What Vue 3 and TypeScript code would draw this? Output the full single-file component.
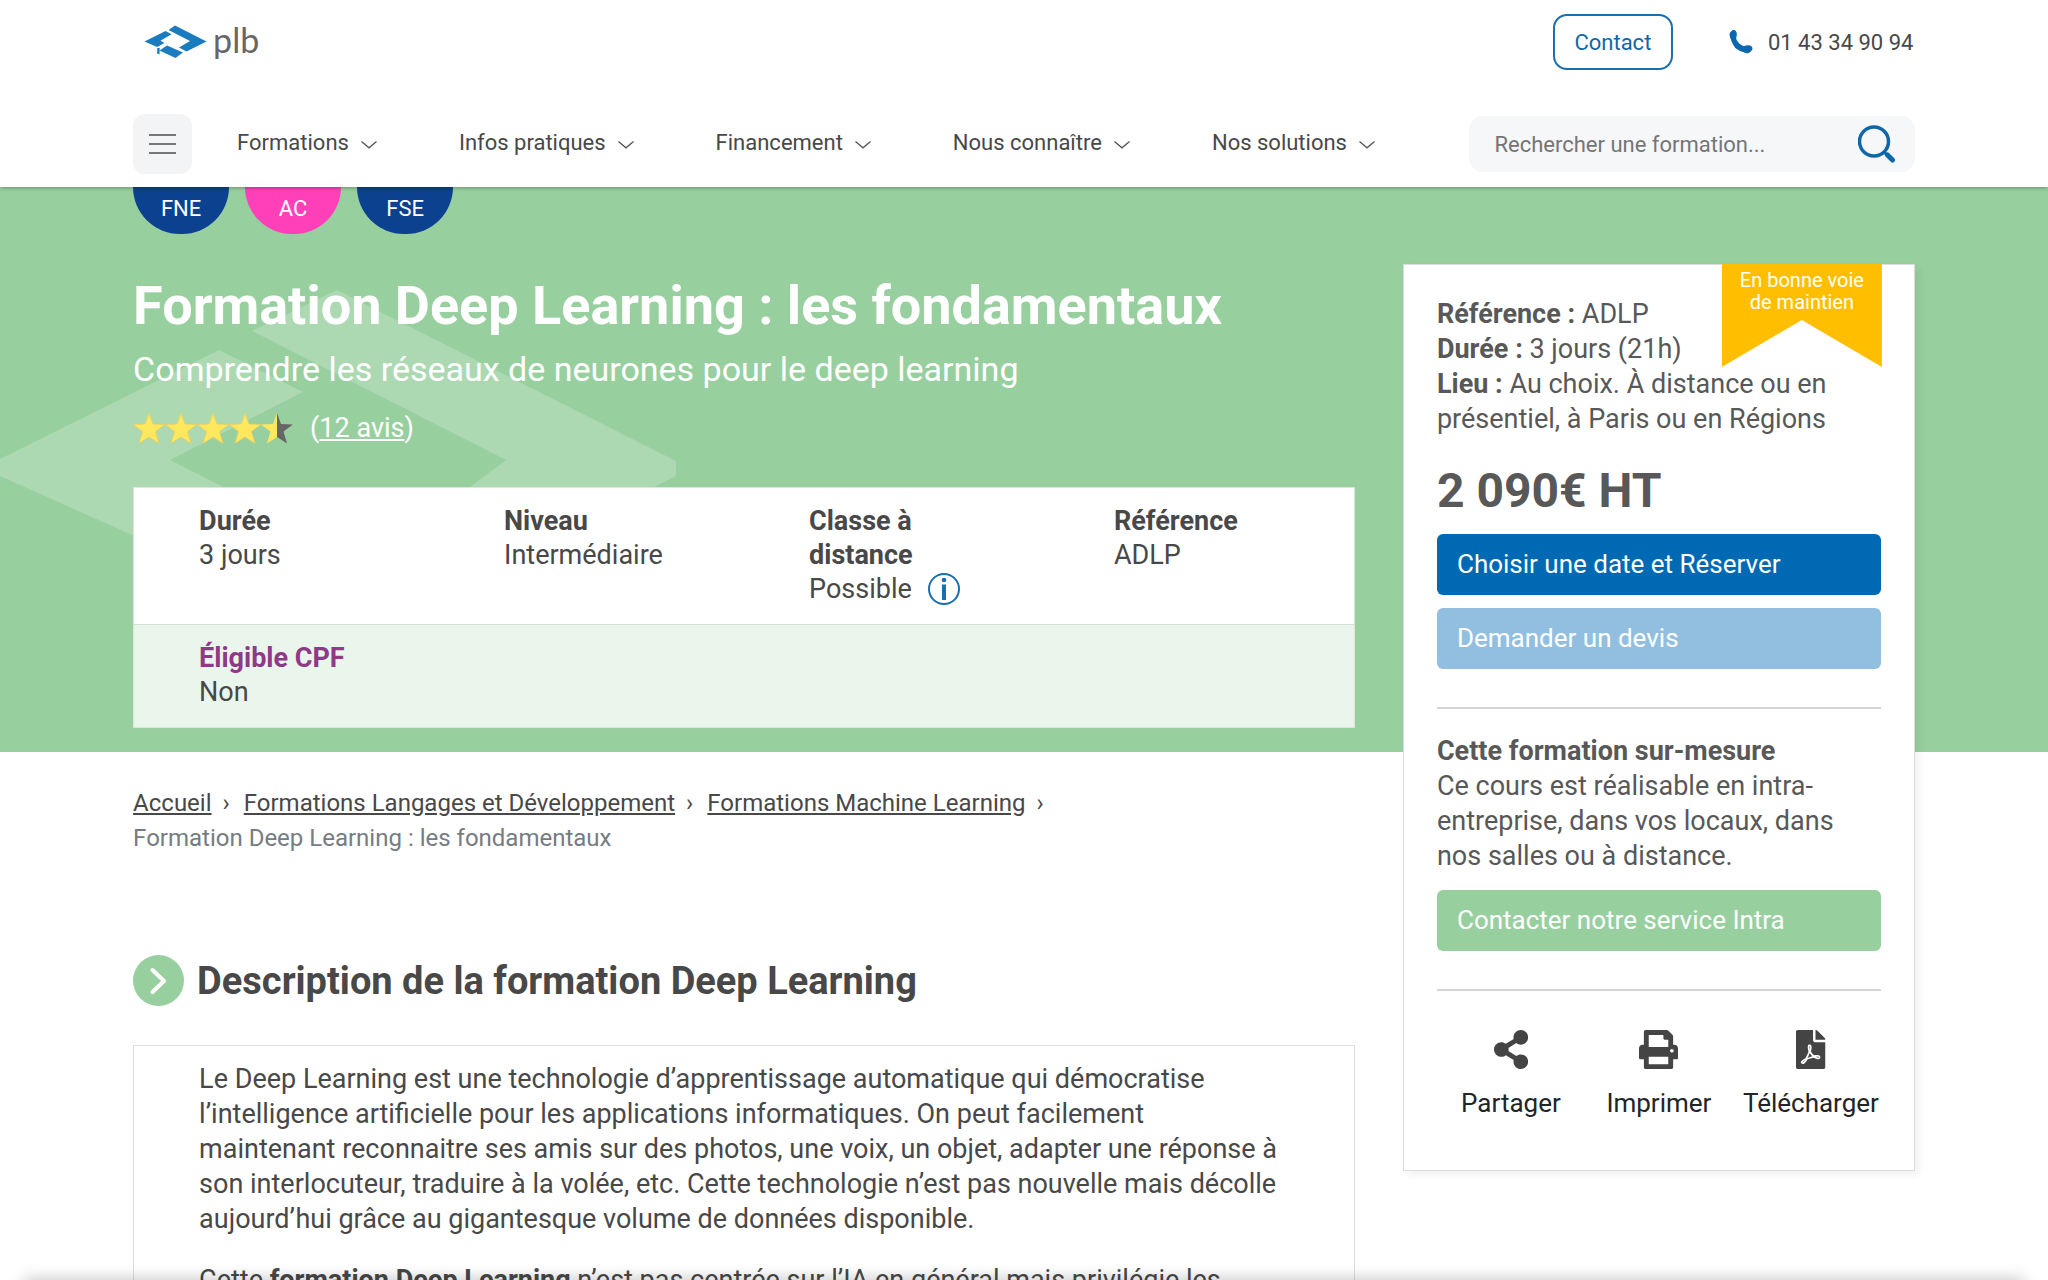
<script setup lang="ts">
interface Fact {
  label: string
  value: string
  info?: boolean
}

interface Action {
  label: string
  viewBox: string
  path: string
}

const navItems: string[] = ['Formations', 'Infos pratiques', 'Financement', 'Nous connaître', 'Nos solutions']

const badges: { text: string; tone: string }[] = [
  { text: 'FNE', tone: 'blue' },
  { text: 'AC', tone: 'pink' },
  { text: 'FSE', tone: 'blue' },
]

const facts: Fact[] = [
  { label: 'Durée', value: '3 jours' },
  { label: 'Niveau', value: 'Intermédiaire' },
  { label: 'Classe à distance', value: 'Possible', info: true },
  { label: 'Référence', value: 'ADLP' },
]

const crumbs: string[] = ['Accueil', 'Formations Langages et Développement', 'Formations Machine Learning']

const starPath = 'M16 0l4 11 12 .5-9.500 7 3.500 12L16 24 6 30.500l3.500-12L0 11.500l12-.5z'

const actions: Action[] = [
  {
    label: 'Partager',
    viewBox: '0 0 448 512',
    path: 'M352 320c-22.608 0-43.387 7.819-59.79 20.895l-102.486-64.054a96.551 96.551 0 0 0 0-41.683l102.486-64.054C308.613 184.181 329.392 192 352 192c53.019 0 96-42.981 96-96S405.019 0 352 0s-96 42.981-96 96c0 7.158.79 14.13 2.276 20.841L155.79 180.895C139.387 167.819 118.608 160 96 160c-53.019 0-96 42.981-96 96s42.981 96 96 96c22.608 0 43.387-7.819 59.79-20.895l102.486 64.054A96.301 96.301 0 0 0 256 416c0 53.019 42.981 96 96 96s96-42.981 96-96-42.981-96-96-96z',
  },
  {
    label: 'Imprimer',
    viewBox: '0 0 512 512',
    path: 'M464 192h-16V81.941a24 24 0 0 0-7.029-16.97L383.029 7.029A24 24 0 0 0 366.059 0H88C74.745 0 64 10.745 64 24v168H48c-26.51 0-48 21.49-48 48v132c0 6.627 5.373 12 12 12h52v104c0 13.255 10.745 24 24 24h336c13.255 0 24-10.745 24-24V384h52c6.627 0 12-5.373 12-12V240c0-26.51-21.49-48-48-48zm-80 256H128v-96h256v96zM128 224V64h192v40c0 13.2 10.8 24 24 24h40v96H128zm304 72c-13.254 0-24-10.746-24-24s10.746-24 24-24 24 10.746 24 24-10.746 24-24 24z',
  },
  {
    label: 'Télécharger',
    viewBox: '0 0 384 512',
    path: 'M181.9 256.1c-5-16-4.9-46.9-2-46.9 8.4 0 7.6 36.9 2 46.9zm-1.7 47.2c-7.7 20.2-17.3 43.3-28.4 62.7 18.3-7 39-17.2 62.9-21.9-12.7-9.6-24.9-23.4-34.5-40.8zM86.1 428.1c0 .8 13.2-5.4 34.9-40.2-6.7 6.3-29.1 24.5-34.9 40.2zM248 160h136v328c0 13.3-10.7 24-24 24H24c-13.3 0-24-10.7-24-24V24C0 10.7 10.7 0 24 0h200v136c0 13.2 10.8 24 24 24zm-8 171.8c-20-12.2-33.3-29-42.7-53.8 4.5-18.5 11.6-46.6 6.2-64.2-4.7-29.4-42.4-26.5-47.8-6.8-5 18.3-.4 44.1 8.1 77-11.6 27.6-28.7 64.6-40.8 85.8-.1 0-.1.1-.2.1-27.1 13.9-73.6 44.5-54.5 68 5.6 6.9 16 10 21.5 10 17.9 0 35.7-18 61.1-61.8 25.8-8.5 54.1-19.1 79-23.2 21.7 11.8 47.1 19.5 64 19.5 29.2 0 31.2-32 19.7-43.4-13.9-13.6-54.3-9.7-73.6-7.2zM377 105L279 7c-4.5-4.5-10.600-7-17-7h-6v128h128v-6.1c0-6.3-2.5-12.4-7-16.9zm-74.1 255.3c4.1-2.7-2.5-11.9-42.8-9 37.1 15.8 42.8 9 42.8 9z',
  },
]
</script>

<template>
  <div class="page">
    <header class="header">
      <div class="topbar">
        <a href="#" class="logo" aria-label="plb">
          <svg width="64" height="34" viewBox="0 0 64 34" aria-hidden="true">
            <g fill="#1b7bbf">
              <path d="M.5 16.500 21.500 6l6 3.200-11 6.600 4 2.200-7.500 4z" />
              <path d="M24.500 5 31 .5l31.500 16-20 10-7.500-4 11-6.500z" />
              <path d="M23 20.500l16 7-7.500 5.500-16-7.500z" />
              <path d="M13.300 23h2.400l-.2 7-1-1.500-1.500.6z" />
            </g>
          </svg>
          <span>plb</span>
        </a>
        <div class="topbar-right">
          <button type="button" class="contact">Contact</button>
          <a href="#" class="phone">
            <svg width="24" height="24" viewBox="0 0 16 16" fill="#0c68ae" aria-hidden="true">
              <path d="M1.885.511a1.745 1.745 0 0 1 2.610.163C5.600 2 5.300 3.600 4.700 5.600c.9 2.200 2.700 4.300 5.200 5.200 1.600-.8 3.900-1 5.200.2.8.8.7 1.900.003 2.611l-1.034 1.034c-.74.74-1.846 1.065-2.877.702a18.634 18.634 0 0 1-7.010-3.420A18.634 18.634 0 0 1 .8 5.200C.4 3.800.1 2.300.85 1.545z" />
            </svg>
            01 43 34 90 94
          </a>
        </div>
      </div>
      <div class="menubar">
        <button type="button" class="burger" aria-label="Menu"><i></i><i></i><i></i></button>
        <nav class="nav">
          <a v-for="item in navItems" :key="item" href="#">
            {{ item }}
            <svg width="16" height="8" viewBox="0 0 16 8" fill="none" stroke="#555" stroke-width="1.300" aria-hidden="true">
              <path d="M.5.5 8 6.800 15.500.5" />
            </svg>
          </a>
        </nav>
        <form class="search" @submit.prevent>
          <input type="search" placeholder="Rechercher une formation..." aria-label="Rechercher une formation" />
          <button type="submit" aria-label="Rechercher">
            <svg width="38" height="38" viewBox="0 0 38 38" fill="none" stroke="#0f67a8" aria-hidden="true">
              <circle cx="16" cy="16.500" r="14.500" stroke-width="3.500" />
              <path d="M26 27l4 4" stroke-width="3" />
              <path d="M29.500 30l5 5" stroke-width="5" stroke-linecap="round" />
            </svg>
          </button>
        </form>
      </div>
    </header>

    <main class="layout">
      <div class="hero-bg">
        <svg width="676" height="400" viewBox="0 0 676 400" fill="#fff" fill-opacity=".2" aria-hidden="true">
          <path d="M0 272 219 163l84 42-133 68 172 87-81 42-17-4L0 289z" />
          <path d="M337 103 676 274v15L470 393l-74-38 110-82-254-129z" />
        </svg>
      </div>

      <section class="hero">
        <ul class="badges">
          <li v-for="badge in badges" :key="badge.text" :class="badge.tone">{{ badge.text }}</li>
        </ul>
        <h1>Formation Deep Learning : les fondamentaux</h1>
        <p class="subtitle">Comprendre les réseaux de neurones pour le deep learning</p>
        <div class="rating">
          <span class="stars" role="img" aria-label="4,5 sur 5">
            <svg v-for="n in 4" :key="n" width="32" height="32" viewBox="0 0 32 32">
              <path :d="starPath" fill="#ffe75e" stroke="#e3cf62" stroke-width=".8" />
            </svg>
            <svg width="32" height="32" viewBox="0 0 32 32">
              <defs>
                <linearGradient id="half">
                  <stop offset=".5" stop-color="#ffe75e" />
                  <stop offset=".5" stop-color="#666" />
                </linearGradient>
              </defs>
              <path :d="starPath" fill="url(#half)" />
            </svg>
          </span>
          <span class="reviews">(<a href="#">12 avis</a>)</span>
        </div>
        <div class="facts">
          <dl class="facts-row">
            <div v-for="fact in facts" :key="fact.label">
              <dt>{{ fact.label }}</dt>
              <dd>
                {{ fact.value }}
                <svg v-if="fact.info" width="34" height="34" viewBox="0 0 34 34" fill="none" stroke="#1a6fad" aria-hidden="true">
                  <circle cx="17" cy="17" r="15" stroke-width="2" />
                  <path d="M17 12.500V28" stroke-width="4" />
                  <circle cx="17" cy="8" r="2.300" fill="#1a6fad" stroke="none" />
                </svg>
              </dd>
            </div>
          </dl>
          <dl class="facts-row cpf">
            <div>
              <dt>Éligible CPF</dt>
              <dd>Non</dd>
            </div>
          </dl>
        </div>
      </section>

      <article class="content">
        <nav class="crumbs" aria-label="Fil d’Ariane">
          <span v-for="crumb in crumbs" :key="crumb" class="crumb">
            <a href="#">{{ crumb }}</a><span class="sep">›</span>
          </span>
          <span class="current">Formation Deep Learning : les fondamentaux</span>
        </nav>
        <h2>
          <svg width="51" height="51" viewBox="0 0 51 51" aria-hidden="true">
            <circle cx="25.500" cy="25.500" r="25.500" fill="#98cf9f" />
            <path d="M19.500 15 31 26 19.500 37" fill="none" stroke="#fff" stroke-width="4" stroke-linecap="round" stroke-linejoin="round" />
          </svg>
          Description de la formation Deep Learning
        </h2>
        <div class="description">
          <p>
            Le Deep Learning est une technologie d’apprentissage automatique qui démocratise l’intelligence
            artificielle pour les applications informatiques. On peut facilement maintenant reconnaitre ses amis
            sur des photos, une voix, un objet, adapter une réponse à son interlocuteur, traduire à la volée, etc.
            Cette technologie n’est pas nouvelle mais décolle aujourd’hui grâce au gigantesque volume de données
            disponible.
          </p>
          <p>
            Cette <strong>formation Deep Learning</strong> n’est pas centrée sur l’IA en général mais privilégie les
          </p>
        </div>
      </article>

      <aside class="card">
        <div class="ribbon">En bonne voie de maintien</div>
        <p class="card-text">
          <strong>Référence :</strong> ADLP<br />
          <strong>Durée :</strong> 3 jours (21h)<br />
          <strong>Lieu :</strong> Au choix. À distance ou en présentiel, à Paris ou en Régions
        </p>
        <p class="price">2 090€ HT</p>
        <button type="button" class="cta book">Choisir une date et Réserver</button>
        <button type="button" class="cta quote">Demander un devis</button>
        <hr />
        <p class="card-text">
          <strong>Cette formation sur-mesure</strong><br />
          Ce cours est réalisable en intra-entreprise, dans vos locaux, dans nos salles ou à distance.
        </p>
        <button type="button" class="cta intra">Contacter notre service Intra</button>
        <hr />
        <div class="actions">
          <a v-for="action in actions" :key="action.label" href="#">
            <svg height="39" :viewBox="action.viewBox" fill="#444" aria-hidden="true"><path :d="action.path" /></svg>
            {{ action.label }}
          </a>
        </div>
      </aside>
    </main>
    <div class="dock" aria-hidden="true"></div>
  </div>
</template>

<style>
body {
  margin: 0;
  background: #fff;
}
</style>

<style scoped>
* {
  box-sizing: border-box;
}

.page {
  height: 100vh;
  overflow: hidden;
  font-family: Roboto, 'Liberation Sans', sans-serif;
  font-size: 27px;
  line-height: 35px;
  color: #484848;
}

a {
  color: inherit;
  text-decoration: none;
}

button,
input {
  border: 0;
  margin: 0;
  padding: 0;
  background: none;
  font: inherit;
  color: inherit;
}

h1,
h2,
p,
ul,
dl,
dd {
  margin: 0;
  padding: 0;
}

svg {
  flex: none;
}

.header {
  position: relative;
  z-index: 2;
  padding: 14px 6.5% 13px;
  background: #fff;
  box-shadow: 0 1px 4px rgba(0, 0, 0, 0.3);
  font-size: 22px;
}

.topbar,
.topbar-right,
.menubar,
.nav,
.nav a,
.phone,
.logo,
.search {
  display: flex;
  align-items: center;
}

.topbar {
  justify-content: space-between;
  height: 56px;
}

.logo {
  gap: 5px;
  padding-left: 11px;
}

.logo span {
  padding-bottom: 4px;
  font: 400 34px/40px Lato, sans-serif;
  color: #666;
}

.topbar-right {
  gap: 56px;
}

.contact {
  width: 120px;
  height: 56px;
  border: 2px solid #1a6fad;
  border-radius: 14px;
  color: #0f67a8;
}

.phone {
  gap: 15px;
  width: 186px;
  white-space: nowrap;
}

.menubar {
  margin-top: 44px;
  height: 60px;
}

.burger {
  display: flex;
  flex-direction: column;
  align-items: center;
  justify-content: center;
  gap: 7px;
  width: 59px;
  height: 60px;
  border-radius: 12px;
  background: #f3f4f6;
}

.burger i {
  width: 27px;
  height: 2px;
  background: #777;
}

.nav {
  gap: 82px;
  margin-left: 45px;
  padding-bottom: 3px;
}

.nav a {
  gap: 12px;
  white-space: nowrap;
}

.nav svg {
  margin-top: 4px;
}

.search {
  width: 25%;
  height: 56px;
  margin-left: auto;
  padding: 0 19px 0 25px;
  border-radius: 14px;
  background: #f6f7f8;
}

.search input {
  flex: 1;
  min-width: 0;
  outline: 0;
}

.search input::placeholder {
  color: #757575;
  opacity: 1;
}

.search svg {
  display: block;
}

.layout {
  display: grid;
  grid-template-columns: 6.5% minmax(0, 1222fr) 48px minmax(0, 512fr) 6.5%;
  grid-template-rows: auto auto;
}

.hero-bg {
  grid-area: 1 / 1 / 2 / -1;
  background: #98cf9f;
}

.hero {
  grid-area: 1 / 2;
  position: relative;
  padding-bottom: 24px;
  color: #fff;
}

.badges {
  display: flex;
  gap: 16px;
  list-style: none;
}

.badges li {
  width: 96px;
  height: 47px;
  padding-top: 4px;
  border-radius: 0 0 48px 48px;
  font-size: 22px;
  text-align: center;
}

.blue {
  background: #0b418f;
}

.pink {
  background: #ff40b8;
}

h1 {
  margin-top: 40px;
  font-size: 54px;
  line-height: 64px;
}

.subtitle {
  margin-top: 10px;
  font-size: 34px;
  line-height: 42px;
}

.rating {
  display: flex;
  align-items: center;
  gap: 17px;
  margin-top: 21px;
}

.stars {
  display: flex;
}

.reviews a {
  text-decoration: underline;
}

.facts {
  margin-top: 41px;
  border: 1px solid #d9e8da;
  line-height: 34px;
  color: #484848;
}

.facts-row {
  display: grid;
  grid-template-columns: repeat(4, 1fr);
  padding: 16px 0 18px;
  background: #fff;
}

.facts-row > div {
  padding: 0 65px;
}

.cpf {
  border-top: 1px solid #d5dfd6;
  background: rgba(255, 255, 255, 0.8);
}

dt {
  font-weight: 700;
}

dd {
  display: flex;
  align-items: center;
  gap: 15px;
}

.cpf dt {
  color: #8e3a87;
}

.content {
  grid-area: 2 / 2;
}

.crumbs {
  margin-top: 34px;
  font-size: 24px;
}

.crumb a {
  text-decoration: underline;
}

.sep {
  margin: 0 14px 0 11px;
}

.current {
  display: block;
  color: #757c82;
}

h2 {
  display: flex;
  align-items: center;
  gap: 13px;
  margin-top: 99px;
  font-size: 38px;
  line-height: 50px;
}

.description {
  margin-top: 39px;
  padding: 16px 72px 16px 65px;
  border: 1px solid #ddd;
}

.description p + p {
  margin-top: 26px;
}

.card {
  grid-area: 1 / 4 / 3 / 5;
  align-self: start;
  position: relative;
  margin-top: 77px;
  padding: 32px 33px 49px;
  border: 1px solid #ddd;
  background: #fff;
  box-shadow: 4px 4px 8px rgba(0, 0, 0, 0.06);
  color: #585858;
}

.ribbon {
  position: absolute;
  top: -1px;
  right: 32px;
  width: 160px;
  height: 103px;
  padding: 5px 12px;
  clip-path: polygon(0 0, 100% 0, 100% 100%, 50% 56px, 0 100%);
  background: #ffbf00;
  color: #fff;
  font-size: 20px;
  line-height: 22px;
  text-align: center;
}

.price {
  margin: 25px 0 14px;
  font-size: 48px;
  line-height: 58px;
  font-weight: 700;
}

.cta {
  display: block;
  width: 100%;
  height: 61px;
  padding: 0 20px;
  border-radius: 6px;
  font-size: 26px;
  text-align: left;
  color: #fff;
}

.book {
  background: #0069b4;
}

.quote {
  margin-top: 13px;
  background: #92bfe0;
}

.intra {
  margin-top: 16px;
  background: #98cf9f;
}

hr {
  margin: 38px 0 25px;
  border: 0;
  border-top: 2px solid #d5d5d5;
}

.actions {
  display: grid;
  grid-template-columns: repeat(3, minmax(0, 1fr));
  padding-top: 14px;
  color: #212529;
  font-size: 26px;
}

.actions a {
  display: flex;
  flex-direction: column;
  align-items: center;
  gap: 17px;
  width: max-content;
  min-width: 100%;
  padding: 0 10px;
}

.dock {
  position: fixed;
  right: 24px;
  bottom: -10px;
  left: 24px;
  height: 10px;
  box-shadow: 0 0 16px rgba(0, 0, 0, 0.3);
}
</style>
